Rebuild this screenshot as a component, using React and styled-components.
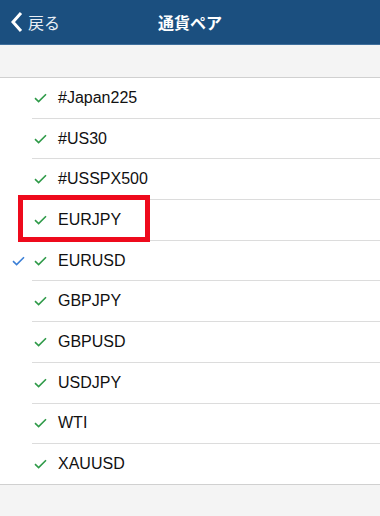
import React from "react"
import styled, {createGlobalStyle} from "styled-components"

const Global = createGlobalStyle`
  body {
    margin: 0;
    background: #f4f4f4;
    font-family: "Liberation Sans", "Noto Sans CJK JP", sans-serif;
  }
`
const Page = styled.div`
  position: relative;
  width: 380px;
  height: 516px;
  background: #f4f4f4;
`
const Header = styled.header`
  height: 44px;
  background: #1b4f7f;
  border-bottom: 1px solid #3f6f9c;
  display: flex;
  align-items: center;
  justify-content: center;
  position: relative;
  color: #fff;
`
const Back = styled.div`
  position: absolute;
  left: 11px;
  top: 0;
  bottom: 0;
  display: flex;
  align-items: center;
  gap: 5px;
  font-size: 16px;
  color: #e8eef5;
`
const Title = styled.div`
  font-size: 16px;
  font-weight: bold;
  font-family: "Noto Sans CJK JP", sans-serif;
`
const Band = styled.div`
  height: 32px;
  border-bottom: 1px solid #d0d0d0;
`
const List = styled.ul`
  list-style: none;
  margin: 0;
  padding: 0;
  background: #fff;
  border-bottom: 1px solid #d0d0d0;
`
const Row = styled.li`
  height: 39.7px;
  display: flex;
  align-items: center;
  position: relative;
  &:not(:last-child)::after {
    content: "";
    position: absolute;
    left: 32px;
    right: 0;
    bottom: -1px;
    height: 1px;
    background: #dcdcdc;
  }
  & + & { margin-top: 1px; }
`
const Mark = styled.span`
  width: 32px;
  display: flex;
  justify-content: center;
  padding-left: 2px;
`
const Check = styled.span`
  width: 24px;
  display: flex;
  align-items: center;
`
const Label = styled.span`
  font-size: 16px;
  color: #111;
`
const Highlight = styled.div`
  position: absolute;
  left: 18px;
  top: 195px;
  width: 122px;
  height: 37px;
  border: 5px solid #ee0a1c;
`

const Tick = ({color}) => (
  <svg width="13" height="10" viewBox="0 0 13 10">
    <path d="M1 5.2 L4.6 8.6 L12 1.2" fill="none" stroke={color} strokeWidth="1.6" />
  </svg>
)

const items = ["#Japan225", "#US30", "#USSPX500", "EURJPY", "EURUSD", "GBPJPY", "GBPUSD", "USDJPY", "WTI", "XAUUSD"]

export default function App(){
  return (
    <Page>
      <Global />
      <Header>
        <Back>
          <svg width="12" height="22" viewBox="0 0 12 22">
            <path d="M10 2 L2 11 L10 20" fill="none" stroke="#fff" strokeWidth="3" />
          </svg>
          戻る
        </Back>
        <Title>通貨ペア</Title>
      </Header>
      <Band />
      <List>
        {items.map(it => (
          <Row key={it}>
            <Mark>{it === "EURUSD" && <Tick color="#3b7fd6" />}</Mark>
            <Check><Tick color="#2e9a48" /></Check>
            <Label>{it}</Label>
          </Row>
        ))}
      </List>
      <Highlight />
    </Page>
  )
}
